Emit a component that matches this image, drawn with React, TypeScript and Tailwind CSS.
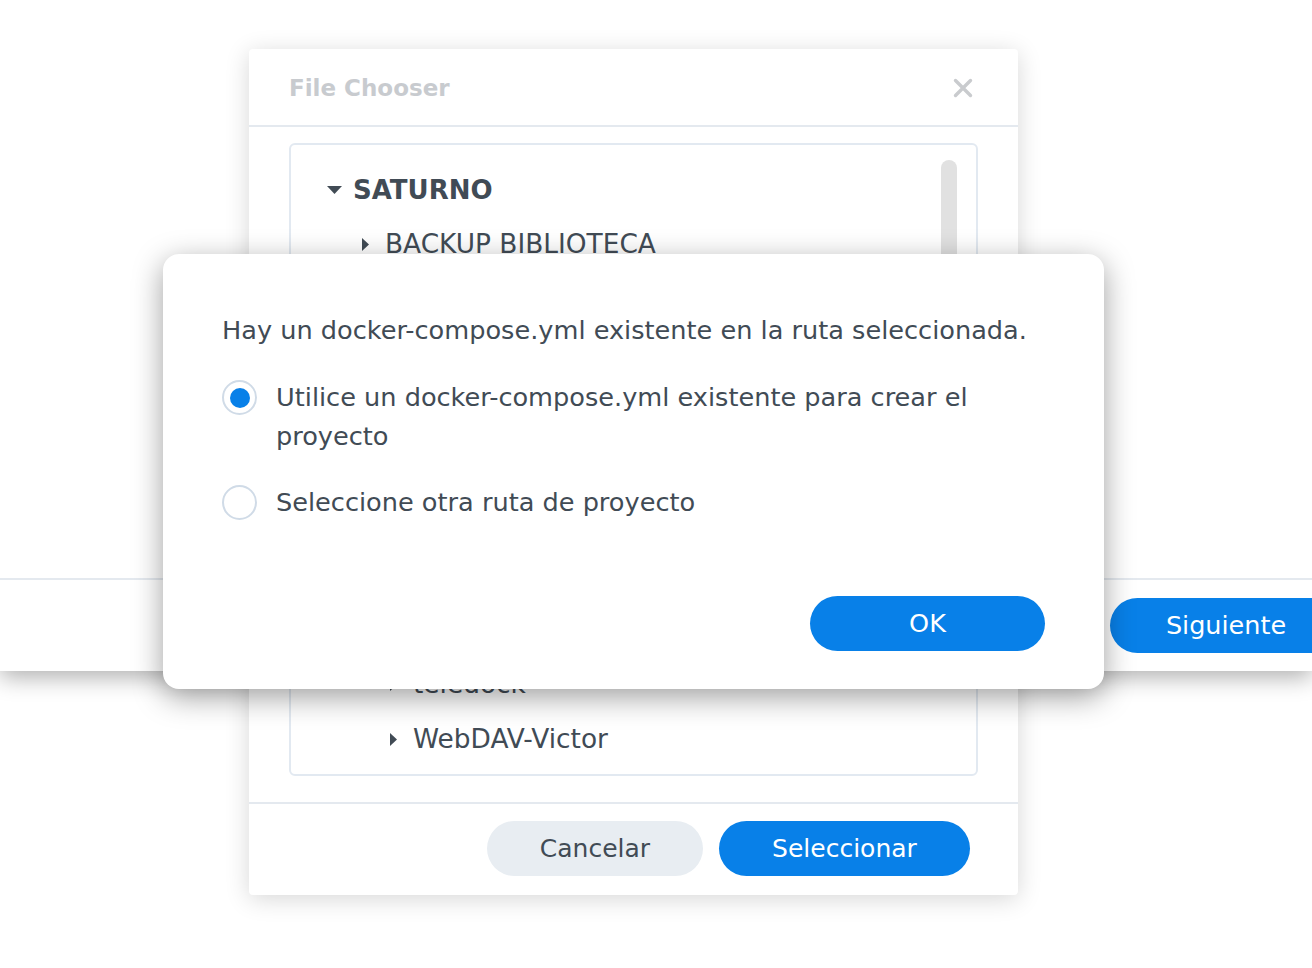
import React from "react";

const TriDown = () => (
  <svg width="15" height="8" viewBox="0 0 15 8" className="shrink-0">
    <polygon points="0,0 15,0 7.5,8" fill="#414b55" />
  </svg>
);

const TriRight = () => (
  <svg width="7" height="13" viewBox="0 0 7 13" className="shrink-0">
    <polygon points="0,0 7,6.5 0,13" fill="#414b55" />
  </svg>
);

const Radio = ({ checked }: { checked?: boolean }) => (
  <span className="mt-[2px] flex h-[35px] w-[35px] shrink-0 items-center justify-center rounded-full border-2 border-[#d0dbe7] bg-white">
    {checked && <span className="h-[20px] w-[20px] rounded-full bg-[#0880e8]" />}
  </span>
);

export default function App() {
  return (
    <div className="relative h-[968px] w-[1312px] overflow-hidden bg-white font-['DejaVu_Sans',Verdana,sans-serif] text-[#414b55]">
      {/* Wizard window behind */}
      <div className="flex h-[671px] w-[1312px] flex-col bg-white shadow-[0_6px_22px_rgba(0,0,0,0.32)]">
        <div className="flex-1" />
        <div className="flex h-[93px] items-center justify-end border-t-2 border-[#e4e9ef]">
          <button className="mr-[-30px] h-[55px] w-[232px] shrink-0 rounded-full bg-[#0880e8] text-[25.5px] text-white">
            Siguiente
          </button>
        </div>
      </div>

      {/* File chooser window */}
      <div className="absolute left-[249px] top-[49px] z-10 flex h-[846px] w-[769px] flex-col rounded-[4px] bg-white shadow-[0_4px_24px_rgba(0,0,0,0.16)]">
        <div className="flex h-[78px] shrink-0 items-center justify-between border-b-2 border-[#e4e9ef] pl-[40px] pr-[45px] pt-[2px]">
          <span className="text-[23px] font-bold text-[#c8cbcf]">File Chooser</span>
          <svg width="20" height="20" viewBox="0 0 20 20">
            <path d="M2.5 2.5 L17.5 17.5 M17.5 2.5 L2.5 17.5" stroke="#c9cbce" strokeWidth="3.4" strokeLinecap="round" />
          </svg>
        </div>
        <div className="flex-1 px-[40px] pb-[26px] pt-[16px]">
          <div className="relative h-full overflow-hidden rounded-[6px] border-2 border-[#e2e9f1] pt-[17px]">
            <div className="flex h-[55px] items-center pl-[36px]">
              <TriDown />
              <span className="ml-[11px] text-[26px] font-bold leading-none">SATURNO</span>
            </div>
            <div className="flex h-[55px] items-center pl-[71px]">
              <TriRight />
              <span className="ml-[16px] text-[26.4px] leading-none">BACKUP BIBLIOTECA</span>
            </div>
            <div className="h-[385px]" />
            <div className="flex h-[55px] items-center pl-[99px]">
              <TriRight />
              <span className="ml-[16px] text-[26.4px] leading-none">teledock</span>
            </div>
            <div className="flex h-[55px] items-center pl-[99px]">
              <TriRight />
              <span className="ml-[16px] text-[26.4px] leading-none">WebDAV-Victor</span>
            </div>
            <div className="absolute right-[19px] top-[15px] h-[480px] w-[16px] rounded-full bg-[#e1e1e1]" />
          </div>
        </div>
        <div className="flex h-[93px] shrink-0 items-center justify-end gap-[16px] border-t-2 border-[#e4e9ef] pb-[2px] pr-[48px]">
          <button className="h-[55px] w-[216px] rounded-full bg-[#e8edf2] text-[25px] text-[#414b55]">
            Cancelar
          </button>
          <button className="h-[55px] w-[251px] rounded-full bg-[#0880e8] text-[25px] text-white">
            Seleccionar
          </button>
        </div>
      </div>

      {/* Confirm dialog */}
      <div className="absolute left-[163px] top-[254px] z-20 flex h-[435px] w-[941px] flex-col rounded-[16px] bg-white px-[59px] pb-[38px] pt-[57px] shadow-[0_8px_30px_rgba(0,0,0,0.38)]">
        <p className="text-[25.6px] leading-[39px]">
          Hay un docker-compose.yml existente en la ruta seleccionada.
        </p>
        <div className="mt-[28px] flex items-start gap-[19px]">
          <Radio checked />
          <span className="text-[25.6px] leading-[39px]">
            Utilice un docker-compose.yml existente para crear el proyecto
          </span>
        </div>
        <div className="mt-[27px] flex items-start gap-[19px]">
          <Radio />
          <span className="text-[25.6px] leading-[39px]">Seleccione otra ruta de proyecto</span>
        </div>
        <div className="mt-auto flex justify-end">
          <button className="h-[55px] w-[235px] rounded-full bg-[#0880e8] text-[25.5px] text-white">
            OK
          </button>
        </div>
      </div>
    </div>
  );
}
